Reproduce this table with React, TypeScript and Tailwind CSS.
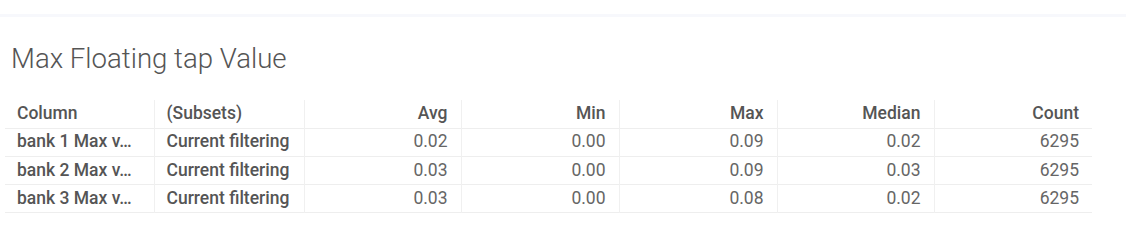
const rows = [
  { column: 'bank 1 Max v…', subset: 'Current filtering', avg: '0.02', min: '0.00', max: '0.09', median: '0.02', count: '6295' },
  { column: 'bank 2 Max v…', subset: 'Current filtering', avg: '0.03', min: '0.00', max: '0.09', median: '0.03', count: '6295' },
  { column: 'bank 3 Max v…', subset: 'Current filtering', avg: '0.03', min: '0.00', max: '0.08', median: '0.02', count: '6295' },
]

const numCols = ['Avg', 'Min', 'Max', 'Median', 'Count'] as const

export default function App() {
  return (
    <div className="w-[1126px] h-[246px] bg-white overflow-hidden" style={{ fontFamily: 'Roboto, sans-serif' }}>
      <div className="h-[14px]" />
      <div className="h-[3px] bg-[#f7f8fc]" />
      <h1 className="mt-[26px] pl-[11px] text-[27.6px] leading-[32px] font-light text-[#555]">Max Floating tap Value</h1>
      <div className="pl-[5px] mt-[25px]">
        <table className="table-fixed border-collapse text-[17.5px] leading-none">
          <colgroup>
            <col className="w-[149px]" />
            <col className="w-[150px]" />
            <col className="w-[157px]" />
            <col className="w-[158px]" />
            <col className="w-[158px]" />
            <col className="w-[157px]" />
            <col className="w-[158px]" />
          </colgroup>
          <thead>
            <tr className="h-[28px] border-b border-[#eeeeee]">
              <th className="px-3 text-left font-medium text-[#555]">Column</th>
              <th className="px-3 text-left font-medium text-[#555] border-l border-[#f0f0f0]">(Subsets)</th>
              {numCols.map((c) => (
                <th key={c} className="pl-3 pr-[13px] text-right font-medium text-[#555] border-l border-[#f0f0f0]">{c}</th>
              ))}
            </tr>
          </thead>
          <tbody>
            {rows.map((r) => (
              <tr key={r.column} className="h-[28.3px] border-b border-[#eeeeee]">
                <td className="px-3 text-left font-medium text-[#555]">{r.column}</td>
                <td className="px-3 text-left font-medium text-[#555] border-l border-[#f0f0f0]">{r.subset}</td>
                {[r.avg, r.min, r.max, r.median, r.count].map((v, i) => (
                  <td key={i} className="pl-3 pr-[13px] text-right text-[#666] border-l border-[#f0f0f0]">{v}</td>
                ))}
              </tr>
            ))}
          </tbody>
        </table>
      </div>
    </div>
  )
}
